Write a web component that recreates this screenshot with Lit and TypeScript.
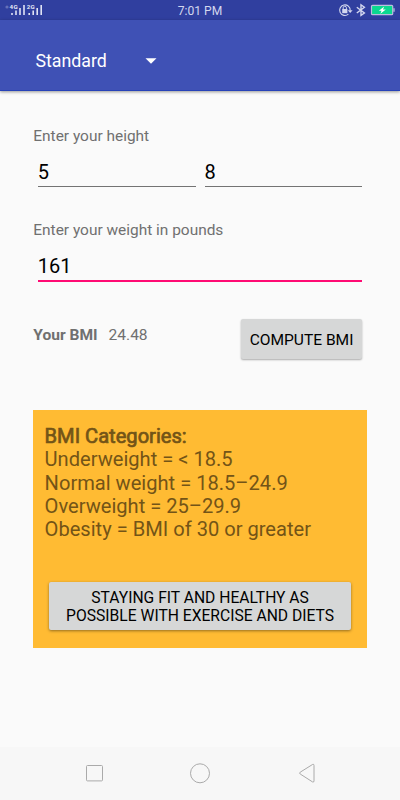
import { LitElement, html, svg, css } from "lit";
import { customElement, state } from "lit/decorators.js";

@customElement("status-bar")
class StatusBar extends LitElement {
  static styles = css`
    :host { display: grid; grid-template-columns: 1fr auto 1fr; align-items: center; height: 20px; background: #303f9f; color: #d3d7ee; }
    svg { display: block; }
    .time { font-size: 12.1px; line-height: 20px; padding-top: 1px; height: 19px; }
    .right { justify-self: end; }
  `;
  render() {
    const bars = (x: number) => svg`
      <path d="M${x} 14.9v-2M${x + 4} 14.9v-4.4M${x + 8} 14.9v-7M${x + 12} 14.9v-10" stroke="#dfe2f4" stroke-width="1.6"/>`;
    return html`
      <svg width="60" height="20" fill="none">
        <circle cx="7" cy="7" r="1.6" fill="#6570b8"/>
        ${bars(12)}${bars(29.2)}
        <text x="9.6" y="9" font-size="6.2" font-weight="700" fill="#e6e8f6" textLength="8">4G</text>
        <text x="26.8" y="9" font-size="6.2" font-weight="700" fill="#e6e8f6" textLength="8">2G</text>
      </svg>
      <span class="time">7:01 PM</span>
      <svg class="right" width="64" height="20" fill="none" stroke="#d3d7ee">
        <path d="M12.4 14.2A5.3 5.3 0 1 1 14.2 10.5" stroke-width="1.1"/>
        <path d="M11.8 10.2h4.8l-2.4 2.8z" fill="#d3d7ee" stroke="none"/>
        <rect x="6.2" y="9" width="5.2" height="4.2" fill="#d3d7ee" stroke="none"/>
        <path d="M7.2 9V7.8a1.6 1.6 0 0 1 3.2 0V9" stroke-width="1"/>
        <path d="M20.8 7.2l7.6 5.8-3.4 2.4V4.8l3.4 2.4-7.6 5.8" stroke-width="1.4"/>
        <rect x="35.5" y="5.3" width="21.2" height="9.4" rx="1" stroke="#b9bfdd" fill="#0ad890" stroke-width="1.2"/>
        <path d="M58 8.2v3.6" stroke="#b9bfdd" stroke-width="1.3"/>
        <path d="M48.2 6.5l-5.4 4.3h2.7l-1.1 3 5.4-4.4h-2.8z" fill="#fff" stroke="none"/>
      </svg>`;
  }
}

@customElement("nav-bar")
class NavBar extends LitElement {
  static styles = css`
    :host { display: flex; justify-content: space-between; align-items: center; height: 53px; padding: 0 82px; background: #f7f7f7; box-sizing: border-box; }
    svg { display: block; }
  `;
  render() {
    return html`
      <svg width="24" height="24" fill="none" stroke="#aaa"><rect x="4.5" y="3.5" width="16" height="15.4" rx="1"/></svg>
      <svg width="24" height="24" fill="none" stroke="#aaa"><circle cx="12" cy="11.3" r="9.5"/></svg>
      <svg width="24" height="24" fill="none" stroke="#aaa"><path d="M18.7 2.4 6.2 10.2q-1.2.9 0 1.8L18.7 20q1.3.5 1.3-1.2V3.5q0-1.7-1.3-1.1Z"/></svg>`;
  }
}

@customElement("app-root")
class AppRoot extends LitElement {
  @state() feet = "5";
  @state() inches = "8";
  @state() pounds = "161";
  @state() bmi = "24.48";

  static styles = css`
    :host { display: flex; flex-direction: column; height: 800px; background: #fafafa; font-family: Roboto, sans-serif; color: #707070; overflow: hidden; }
    .toolbar { box-sizing: border-box; height: 71px; flex: none; display: flex; align-items: center; padding: 11px 0 0 35.5px; background: #3f51b5; border-bottom: 1px solid #2742b8; color: #fff; font-size: 17.78px; box-shadow: 0 1px 3px rgba(0,0,0,.4); }
    .unit { width: 109.5px; line-height: 22px; }
    .content { flex: 1; padding: 34.5px 33.3px 0; display: flex; flex-direction: column; }
    .label { font-size: 15.45px; line-height: 20px; height: 20px; }
    .fields { display: flex; align-items: flex-start; gap: 9px; padding: 0 4.5px; height: 42px; margin-bottom: 32px; }
    .field { flex: 1; box-sizing: border-box; height: 41px; border-bottom: 1px solid #737373; color: #000; font-size: 20px; line-height: 24px; padding-top: 14.5px; }
    .field.active { height: 42px; border-bottom: 2px solid #ff0a73; }
    .result { display: flex; align-items: flex-start; height: 42px; font-size: 15.56px; line-height: 20px; margin-top: 5.5px; }
    .result b { margin-right: 11px; margin-top: 5.5px; }
    .result span { margin-top: 5.5px; }
    .button { box-sizing: border-box; background: #d6d7d7; color: #000; border-radius: 2px; font-size: 15.56px; text-align: center; box-shadow: 0 1px 2px rgba(0,0,0,.32); }
    .compute { margin: -.5px 4.7px 0 auto; width: 121px; height: 40.5px; line-height: 43px; white-space: nowrap; }
    .card { box-sizing: border-box; background: #ffbb33; width: 333.4px; height: 238px; margin-top: 48.5px; padding: 15.3px 15.5px 0 11.3px; color: #735417; font-size: 20.1px; line-height: 23.4px; }
    .card p { margin: 0; white-space: nowrap; }
    .heading { -webkit-text-stroke: .7px #735417; }
    .fit { margin: 39.7px 0 0 4.4px; height: 48.5px; padding-top: 7.3px; line-height: 18.3px; font-size: 15.65px; white-space: nowrap; box-shadow: 0 1px 3px rgba(0,0,0,.42); }
    nav-bar { flex: none; }
  `;

  render() {
    return html`
      <status-bar></status-bar>
      <div class="toolbar">
        <span class="unit">Standard</span>
        <svg width="12" height="8"><path d="M.5 1.2h11L6 6.8z" fill="#fff"/></svg>
      </div>
      <div class="content">
        <div class="label">Enter your height</div>
        <div class="fields">
          <div class="field">${this.feet}</div>
          <div class="field">${this.inches}</div>
        </div>
        <div class="label">Enter your weight in pounds</div>
        <div class="fields"><div class="field active">${this.pounds}</div></div>
        <div class="result">
          <b>Your BMI</b><span>${this.bmi}</span>
          <div class="button compute">COMPUTE BMI</div>
        </div>
        <div class="card">
          <p class="heading">BMI Categories:</p>
          <p>Underweight = &lt; 18.5</p>
          <p>Normal weight = 18.5–24.9</p>
          <p>Overweight = 25–29.9</p>
          <p>Obesity = BMI of 30 or greater</p>
          <div class="button fit">STAYING FIT AND HEALTHY AS<br>POSSIBLE WITH EXERCISE AND DIETS</div>
        </div>
      </div>
      <nav-bar></nav-bar>`;
  }
}
